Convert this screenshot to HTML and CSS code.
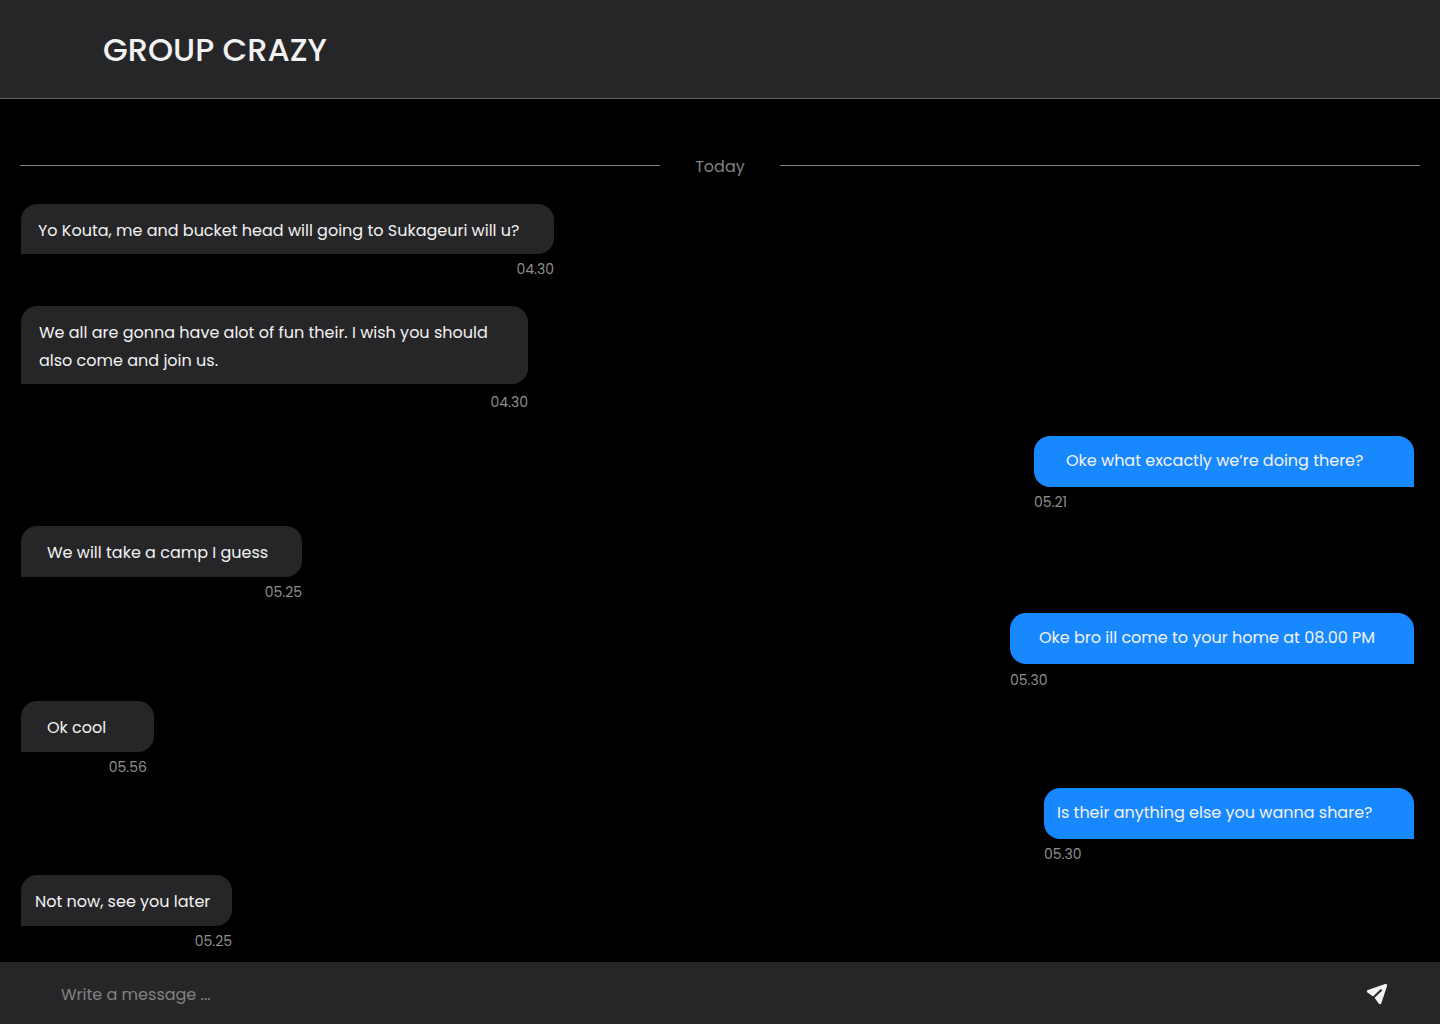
FILE: index.html
```html
<!DOCTYPE html>
<html lang="en">
<head>
<meta charset="utf-8">
<meta name="viewport" content="width=device-width, initial-scale=1">
<title>Group Crazy</title>
<link rel="stylesheet" href="styles.css">
</head>
<body>
<div class="chat">
  <header class="chat-header"><h1 class="chat-title">GROUP CRAZY</h1></header>
  <main class="conversation">
    <div class="day"><span class="day-label">Today</span></div>
    <ol class="messages">
      <li class="message message-intro">
        <p class="bubble bubble-invite">Yo Kouta, me and bucket head will going to Sukageuri will u?</p>
        <time class="time">04.30</time>
      </li>
      <li class="message message-long">
        <p class="bubble bubble-wish">We all are gonna have alot of fun their. I wish you should<br>also come and join us.</p>
        <time class="time">04.30</time>
      </li>
      <li class="message sent message-spaced">
        <p class="bubble bubble-question">Oke what excactly we’re doing there?</p>
        <time class="time">05.21</time>
      </li>
      <li class="message">
        <p class="bubble bubble-camp">We will take a camp I guess</p>
        <time class="time">05.25</time>
      </li>
      <li class="message sent">
        <p class="bubble bubble-home">Oke bro ill come to your home at 08.00 PM</p>
        <time class="time">05.30</time>
      </li>
      <li class="message">
        <p class="bubble bubble-cool">Ok cool</p>
        <time class="time time-inset">05.56</time>
      </li>
      <li class="message sent">
        <p class="bubble bubble-share">Is their anything else you wanna share?</p>
        <time class="time">05.30</time>
      </li>
      <li class="message">
        <p class="bubble bubble-later">Not now, see you later</p>
        <time class="time">05.25</time>
      </li>
    </ol>
  </main>
  <form class="composer">
    <input class="composer-input" type="text" placeholder="Write a message ..." aria-label="Message">
    <button class="send" type="button" aria-label="Send">
      <svg class="send-icon" viewBox="0 0 24 24" aria-hidden="true">
        <path class="send-plane" d="M20.7 3.3 3.3 9.3 8.6 12.9 11.1 15.4 14.9 20.7Z"/>
        <path class="send-fold" d="M16 8.2 8.4 15.4"/>
      </svg>
    </button>
  </form>
</div>
</body>
</html>
```
FILE: styles.css
```css
* { box-sizing: border-box; }

body {
  margin: 0;
  background: #000;
  color: #f2f2f2;
  font-family: Poppins, Inter, sans-serif;
  font-size: 16px;
  line-height: 28px;
}

.chat {
  display: flex;
  flex-direction: column;
  min-height: 100vh;
}

.chat-header {
  padding: 26px 103px 24px;
  background: #262628;
  border-bottom: 1px solid #5d6466;
}

.chat-title {
  margin: 0;
  font-size: 32px;
  font-weight: 500;
  line-height: 48px;
}

.conversation {
  flex: 1;
  padding: 50px 20px 9px;
}

.day {
  display: flex;
  align-items: center;
  color: #828282;
}

.day::before,
.day::after {
  content: "";
  flex: 1;
  height: 1px;
  background: #828282;
}

.day-label {
  width: 120px;
  padding-top: 4px;
  text-align: center;
}

.messages {
  display: flex;
  flex-direction: column;
  align-items: flex-start;
  gap: 10px;
  margin: 0;
  padding: 23px 6px 0 1px;
  list-style: none;
}

.message {
  display: flex;
  flex-direction: column;
  align-items: flex-end;
  max-width: 100%;
}

.message-intro { margin-bottom: 16px; }
.message-long { margin-bottom: 13px; }
.message-spaced { margin-bottom: 3px; }

.sent {
  align-self: flex-end;
  align-items: flex-start;
}

.bubble {
  max-width: 100%;
  margin: 0;
  padding: 13px 0 10px;
  background: #262628;
  border-radius: 16px 16px 16px 0;
}

.message-intro .bubble,
.message-long .bubble {
  padding-bottom: 9px;
}

.sent .bubble {
  padding-top: 11px;
  padding-bottom: 12px;
  background: #1888ff;
  border-radius: 16px 16px 0 16px;
}

.bubble-invite { width: 533px; padding-left: 17px; }
.bubble-wish { width: 507px; padding-left: 18px; }
.bubble-question { width: 380px; padding-left: 32px; }
.bubble-camp { width: 281px; padding-left: 26px; }
.bubble-home { width: 404px; padding-left: 29px; margin-bottom: 1px; }
.bubble-cool { width: 133px; padding-left: 26px; }
.bubble-share { width: 370px; padding-left: 13px; }
.bubble-later { width: 211px; padding-left: 14px; }

.time {
  margin-top: 4px;
  color: #8e8e8e;
  font-size: 14px;
  line-height: 22px;
}

.message-long .time { margin-top: 7px; }
.time-inset { margin-right: 7px; }

.composer {
  display: flex;
  align-items: center;
  gap: 24px;
  padding: 15px 51px 13px 61px;
  background: #262628;
}

.composer-input {
  flex: 1;
  min-width: 0;
  height: 34px;
  padding: 0;
  border: 0;
  outline: 0;
  background: transparent;
  color: #f2f2f2;
  font: inherit;
}

.composer-input::placeholder {
  color: #828282;
  opacity: 1;
}

.send {
  display: flex;
  padding: 0;
  border: 0;
  background: none;
  cursor: pointer;
}

.send-icon {
  width: 24px;
  height: 24px;
}

.send-plane {
  fill: #f2f2f2;
  stroke: #f2f2f2;
  stroke-width: 3;
  stroke-linejoin: round;
}

.send-fold {
  fill: none;
  stroke: #262628;
  stroke-width: 2;
  stroke-linecap: round;
}
```
